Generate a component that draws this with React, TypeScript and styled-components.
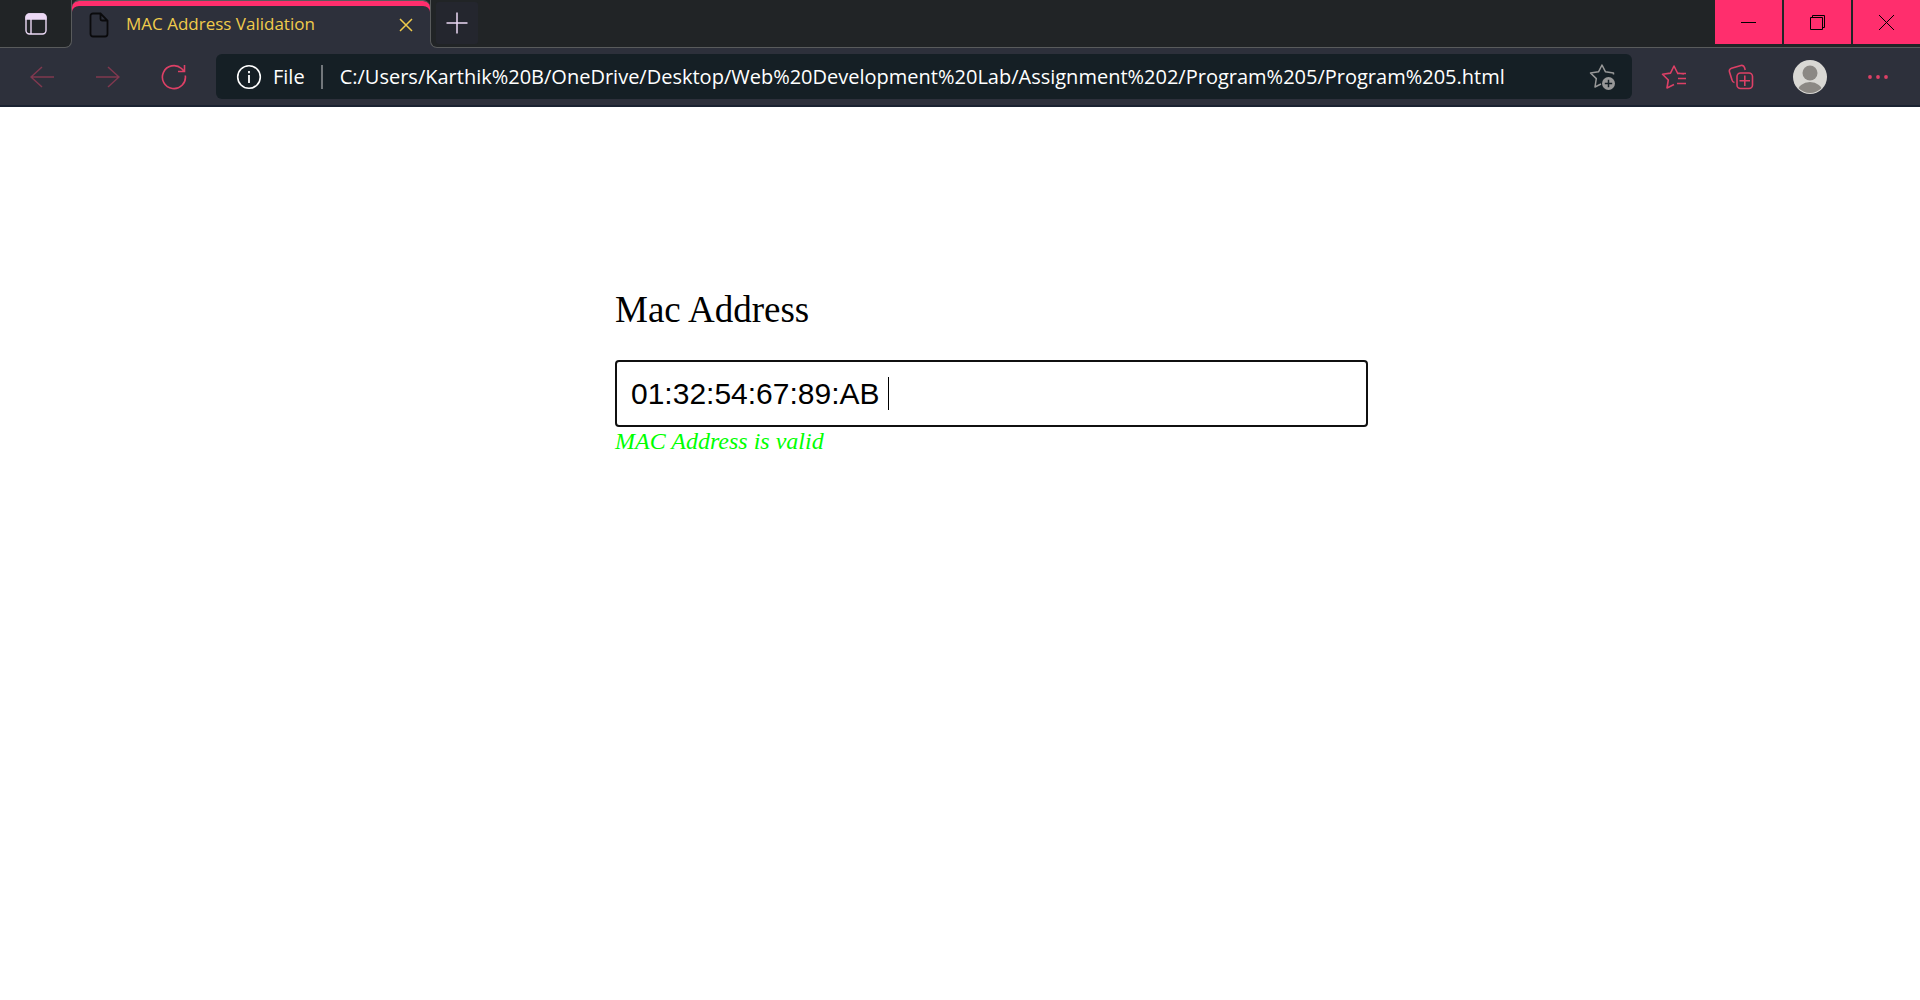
import React, { useState } from "react";
import styled, { createGlobalStyle } from "styled-components";

const color = {
  strip: "#212426",
  chrome: "#2d303b",
  line: "#595b5c",
  field: "#151f25",
  pink: "#ff2e6d",
  icon: "#dd4066",
  iconOff: "#80384f",
  lilac: "#ecd9f5",
  yellow: "#f0cb4b",
};

const Global = createGlobalStyle`
  *, *::before, *::after { box-sizing: border-box; }
  body { margin: 0; background: #fff; }
  button { margin: 0; padding: 0; border: 0; background: none; color: inherit; display: flex; align-items: center; justify-content: center; }
  svg { display: block; fill: none; stroke: currentColor; }
`;

const Chrome = styled.header`
  background: ${color.chrome};
  border-bottom: 2px solid #1a2231;
  font-family: "Open Sans", "Noto Sans", sans-serif;
`;

const TabStrip = styled.div`
  display: flex;
  height: 48px;
`;

const StripStart = styled.div`
  display: flex;
  align-items: center;
  justify-content: center;
  width: 72px;
  background: ${color.strip};
  border-right: 1px solid ${color.line};
  border-bottom: 1px solid ${color.line};
  border-bottom-right-radius: 7px;
  color: ${color.lilac};
`;

const TabSlot = styled.div`
  width: 358px;
  background: linear-gradient(${color.strip} 50%, ${color.chrome} 50%);
`;

const Tab = styled.div`
  display: flex;
  align-items: center;
  height: 48px;
  padding: 0 14px 0 17px;
  background: ${color.chrome};
  border-top: 1px solid ${color.line};
  border-radius: 7px 7px 0 0;
  box-shadow: inset 0 5px 0 ${color.pink};
  color: ${color.yellow};
`;

const TabTitle = styled.span`
  flex: 1;
  padding: 0 0 2px 17px;
  font-size: 17px;
  line-height: 24px;
  white-space: nowrap;
`;

const FileIcon = styled.span`
  color: #0a0a0c;
`;

const StripEnd = styled.div`
  display: flex;
  flex: 1;
  justify-content: space-between;
  background: ${color.strip};
  border-left: 1px solid ${color.line};
  border-bottom: 1px solid ${color.line};
  border-bottom-left-radius: 7px;
`;

const NewTab = styled.button`
  width: 42px;
  height: 42px;
  margin: 2px 0 0 5px;
  border-radius: 3px;
  && { background: #24262e; }
  && { color: ${color.lilac}; }
`;

const WindowControls = styled.div`
  display: flex;
  gap: 2px;
`;

const WindowButton = styled.button`
  width: 67px;
  height: 44px;
  && { background: ${color.pink}; }
  && { color: #000; }
`;

const Toolbar = styled.div`
  display: flex;
  align-items: center;
  height: 57px;
  padding: 0 22px;
`;

const NavGroup = styled.nav`
  display: flex;
  gap: 26px;
  margin-right: 22px;
`;

const ToolButton = styled.button<{ $off?: boolean }>`
  width: 40px;
  height: 40px;
  && { color: ${(p) => (p.$off ? color.iconOff : color.icon)}; }
`;

const ToolGroup = styled.div`
  display: flex;
  gap: 28px;
  margin-left: 22px;
`;

const AddressBar = styled.div`
  display: flex;
  flex: 1;
  align-items: center;
  height: 45px;
  padding: 0 14px 0 20px;
  background: ${color.field};
  border-radius: 6px;
  color: #fff;
  font-size: 20px;
`;

const Scheme = styled.span`
  margin: 0 17px 0 11px;
  padding-right: 16px;
  border-right: 2px solid #72777b;
  line-height: 24px;
`;

const AddressInput = styled.input`
  flex: 1;
  min-width: 0;
  padding: 0;
  border: 0;
  outline: 0;
  background: none;
  color: inherit;
  font: inherit;
  line-height: 28px;
`;

const FavoriteButton = styled.button`
  width: 32px;
  height: 32px;
  && { color: #989898; }
`;

const Page = styled.main`
  display: grid;
  grid-template-columns: 615fr 753fr 552fr;
  padding-top: 181px;
  font-family: "Liberation Serif", serif;
  color: #000;
`;

const Form = styled.form`
  grid-column: 2;
  display: flex;
  flex-direction: column;
`;

const Label = styled.label`
  margin-bottom: 29px;
  font-size: 37px;
  line-height: 43px;
`;

const Field = styled.div`
  position: relative;
`;

const MacInput = styled.input`
  display: block;
  width: 100%;
  height: 67px;
  padding: 0 14px;
  border: 2px solid #101010;
  border-radius: 4px;
  outline: 0;
  background: #fff;
  color: #000;
  caret-color: transparent;
  font-family: "Liberation Sans", Arial, sans-serif;
  font-size: 30px;
`;

const Caret = styled.span`
  position: absolute;
  left: 273px;
  top: 17px;
  width: 1px;
  height: 33px;
  background: #000;
`;

const Message = styled.output`
  color: #00ff00;
  font-size: 24px;
  font-style: italic;
  line-height: 28px;
`;

export default function App() {
  const [url, setUrl] = useState(
    "C:/Users/Karthik%20B/OneDrive/Desktop/Web%20Development%20Lab/Assignment%202/Program%205/Program%205.html"
  );
  const [mac, setMac] = useState("01:32:54:67:89:AB ");

  return (
    <>
      <Global />
      <Chrome>
        <TabStrip>
          <StripStart>
            <button aria-label="Tab actions">
              <svg width="22" height="22" viewBox="0 0 22 22" strokeWidth="1.4">
                <rect x="1" y="1" width="20" height="20" rx="3.5" />
                <path d="M1 6V4.500a3.500 3.500 0 0 1 3.500-3.500h13a3.500 3.500 0 0 1 3.500 3.500V6z" fill="currentColor" />
                <path d="M6 6v15" />
              </svg>
            </button>
          </StripStart>
          <TabSlot>
            <Tab>
              <FileIcon>
                <svg width="20" height="26" viewBox="0 0 20 26" strokeWidth="1.8">
                  <path d="M4 1.500h7.500l7 7V22a2.500 2.500 0 0 1-2.500 2.500H4A2.500 2.500 0 0 1 1.500 22V4A2.500 2.500 0 0 1 4 1.500zM11.500 1.500V7A1.500 1.500 0 0 0 13 8.500h5.500" />
                </svg>
              </FileIcon>
              <TabTitle>MAC Address Validation</TabTitle>
              <button aria-label="Close tab">
                <svg width="20" height="20" viewBox="0 0 20 20" strokeWidth="1.5">
                  <path d="M4 4l12 12M16 4L4 16" />
                </svg>
              </button>
            </Tab>
          </TabSlot>
          <StripEnd>
            <NewTab aria-label="New tab">
              <svg width="22" height="22" viewBox="0 0 22 22" strokeWidth="1.5">
                <path d="M11 .5v21M.5 11h21" />
              </svg>
            </NewTab>
            <WindowControls>
              <WindowButton aria-label="Minimize">
                <svg width="15" height="15" viewBox="0 0 15 15">
                  <path d="M0 7.500h15" />
                </svg>
              </WindowButton>
              <WindowButton aria-label="Restore">
                <svg width="15" height="15" viewBox="0 0 15 15">
                  <path d="M.5 2.500h12v12H.5zM2.500 2.500V.5h12v12h-2" />
                </svg>
              </WindowButton>
              <WindowButton aria-label="Close">
                <svg width="15" height="15" viewBox="0 0 15 15">
                  <path d="M0 0l15 15M15 0L0 15" />
                </svg>
              </WindowButton>
            </WindowControls>
          </StripEnd>
        </TabStrip>

        <Toolbar>
          <NavGroup>
            <ToolButton $off aria-label="Back">
              <svg width="24" height="22" viewBox="0 0 24 22" strokeWidth="1.5">
                <path d="M12 1L1 11l11 10M1 11h23" />
              </svg>
            </ToolButton>
            <ToolButton $off aria-label="Forward">
              <svg width="24" height="22" viewBox="0 0 24 22" strokeWidth="1.5">
                <path d="M12 1l11 10-11 10M23 11H0" />
              </svg>
            </ToolButton>
            <ToolButton aria-label="Refresh">
              <svg width="26" height="26" viewBox="0 0 26 26" strokeWidth="1.6">
                <path d="M24.300 11.500A11.500 11.500 0 1 1 20.500 4.500L23 7M23.500 1v6.500H17" />
              </svg>
            </ToolButton>
          </NavGroup>
          <AddressBar>
            <svg width="26" height="26" viewBox="0 0 26 26" strokeWidth="1.6">
              <circle cx="13" cy="13" r="11.300" />
              <path d="M13 11v8M13 7v2.200" strokeWidth="1.800" />
            </svg>
            <Scheme>File</Scheme>
            <AddressInput
              aria-label="Address"
              spellCheck={false}
              value={url}
              onChange={(e) => setUrl(e.target.value)}
            />
            <FavoriteButton aria-label="Add to favorites">
              <svg width="28" height="28" viewBox="0 0 28 28" strokeWidth="1.5" strokeLinejoin="round">
                <path d="M25.500 11.500V10l-8-1.200L14 2l-3.500 6.800L2.500 10l5.800 5.600L7 24l6-3" />
                <circle cx="20.500" cy="20.500" r="6.500" fill="currentColor" stroke="none" />
                <path d="M20.500 16.800v7.400M16.800 20.500h7.400" stroke={color.field} />
              </svg>
            </FavoriteButton>
          </AddressBar>
          <ToolGroup>
            <ToolButton aria-label="Favorites">
              <svg width="26" height="26" viewBox="0 0 26 26" strokeWidth="1.600" strokeLinejoin="round">
                <path d="M13 20.500L6 24l1.300-8L1.500 10.300l8-1.200L13 2l3.500 7 6.500 1M16 9.500H25M17 14.500H25M16 19.500H25" />
              </svg>
            </ToolButton>
            <ToolButton aria-label="Collections">
              <svg width="28" height="26" viewBox="0 0 28 26" strokeWidth="1.600">
                <rect x="9" y="9" width="15.500" height="15.500" rx="3.500" />
                <path d="M16.800 11.500v10.500M11.500 16.800h10.500M6.500 18.500A3 3 0 0 1 4 16L1.500 8a3 3 0 0 1 2-3.800L13 1.500a3 3 0 0 1 3.500 2L17.200 6" />
              </svg>
            </ToolButton>
            <ToolButton aria-label="Profile">
              <svg width="34" height="34" viewBox="0 0 34 34">
                <clipPath id="avatar">
                  <circle cx="17" cy="17" r="16" />
                </clipPath>
                <circle cx="17" cy="17" r="17" fill="#d9d8d4" stroke="none" />
                <g clipPath="url(#avatar)" fill="#8b8884" stroke="none">
                  <circle cx="17" cy="13" r="7.500" />
                  <ellipse cx="17" cy="32" rx="12.500" ry="10" />
                </g>
              </svg>
            </ToolButton>
            <ToolButton aria-label="Settings and more">
              <svg width="20" height="4" viewBox="0 0 20 4">
                <g fill="currentColor" stroke="none">
                  <circle cx="2" cy="2" r="1.900" />
                  <circle cx="10" cy="2" r="1.900" />
                  <circle cx="18" cy="2" r="1.900" />
                </g>
              </svg>
            </ToolButton>
          </ToolGroup>
        </Toolbar>
      </Chrome>

      <Page>
        <Form onSubmit={(e) => e.preventDefault()}>
          <Label htmlFor="mac">Mac Address</Label>
          <Field>
            <MacInput id="mac" spellCheck={false} value={mac} onChange={(e) => setMac(e.target.value)} />
            <Caret />
          </Field>
          <Message htmlFor="mac">MAC Address is valid</Message>
        </Form>
      </Page>
    </>
  );
}
